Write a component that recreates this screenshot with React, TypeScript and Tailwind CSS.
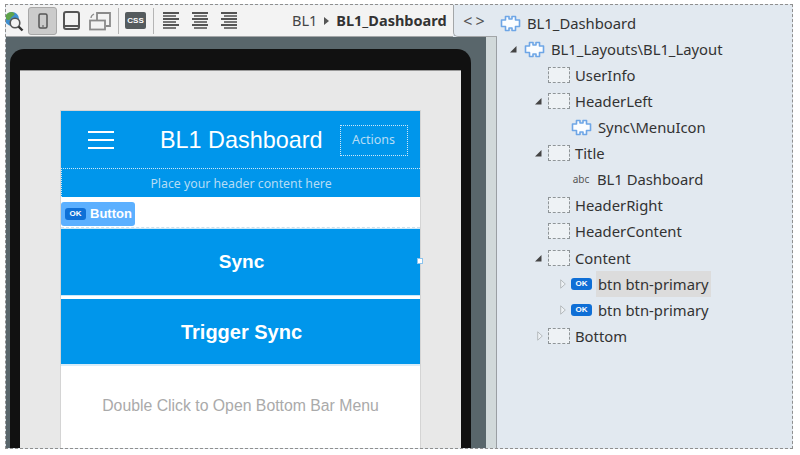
const uiFont = "font-['Noto_Sans',sans-serif]";

function Puzzle() {
  return (
    <svg width="21" height="17" viewBox="0 0 21 17" className="shrink-0">
      <path
        d="M5.500 1.500h3.500v2.500h3V1.500h3.500V5h4v6.500h-4v4h-3.500V13h-3v2.500H5.500v-4h-4V5h4z"
        fill="#fbfdff"
        stroke="#6ea6e6"
        strokeWidth="1.600"
        strokeLinejoin="round"
      />
    </svg>
  );
}

function Placeholder() {
  return <span className="block w-[22px] h-4 shrink-0 border border-dashed border-[#8f9598] bg-[#eef2f5]" />;
}

function OkBadge() {
  return (
    <span className="flex w-[21px] h-[12px] shrink-0 items-center justify-center rounded-[3px] bg-[#0f6fd6] text-[8px] leading-none font-bold text-white font-['Liberation_Sans',sans-serif]">
      OK
    </span>
  );
}

function Abc() {
  return <span className="block w-5 shrink-0 text-[10px] leading-none text-[#555] text-center">abc</span>;
}

function Arrow({ open }: { open?: boolean }) {
  return open ? (
    <svg width="8" height="8" viewBox="0 0 8 8" className="shrink-0">
      <path d="M7.500 1v6.500H1z" fill="#444" />
    </svg>
  ) : (
    <svg width="6" height="10" viewBox="0 0 6 10" className="shrink-0">
      <path d="M.7 .8 5.300 5 .7 9.200z" fill="#eef2f5" stroke="#b5babd" />
    </svg>
  );
}

const treeRows = [
  { label: "BL1_Dashboard", pad: "pl-[4px]", icon: <Puzzle />, gap: "gap-[6px]" },
  { label: "BL1_Layouts\\BL1_Layout", pad: "pl-[13px]", arrow: "w-[15px]", open: true, icon: <Puzzle />, gap: "gap-[6px]" },
  { label: "UserInfo", pad: "pl-[52px]", icon: <Placeholder />, gap: "gap-[5px]" },
  { label: "HeaderLeft", pad: "pl-[38px]", arrow: "w-[14px]", open: true, icon: <Placeholder />, gap: "gap-[5px]" },
  { label: "Sync\\MenuIcon", pad: "pl-[75px]", icon: <Puzzle />, gap: "gap-[6px]" },
  { label: "Title", pad: "pl-[38px]", arrow: "w-[14px]", open: true, icon: <Placeholder />, gap: "gap-[5px]" },
  { label: "BL1 Dashboard", pad: "pl-[75px]", icon: <Abc />, gap: "gap-[6px]" },
  { label: "HeaderRight", pad: "pl-[52px]", icon: <Placeholder />, gap: "gap-[5px]" },
  { label: "HeaderContent", pad: "pl-[52px]", icon: <Placeholder />, gap: "gap-[5px]" },
  { label: "Content", pad: "mt-px pl-[38px]", arrow: "w-[14px]", open: true, icon: <Placeholder />, gap: "gap-[5px]" },
  { label: "btn btn-primary", pad: "pl-[64px]", arrow: "w-[11px]", icon: <OkBadge />, gap: "gap-[6px]", selected: true },
  { label: "btn btn-primary", pad: "pl-[64px]", arrow: "w-[11px]", icon: <OkBadge />, gap: "gap-[6px]" },
  { label: "Bottom", pad: "pl-[41px]", arrow: "w-[11px]", icon: <Placeholder />, gap: "gap-[5px]" },
];

function TreeRow({ row }: { row: (typeof treeRows)[number] }) {
  return (
    <div className={`flex h-[26px] items-center ${row.pad}`}>
      {row.arrow && (
        <span className={`flex shrink-0 items-center ${row.arrow}`}>
          <Arrow open={row.open} />
        </span>
      )}
      <span className={`flex items-center ${row.gap}`}>
        {row.icon}
        <span className={row.selected ? "bg-[#dcdcdc] px-[2px] -mx-[2px] leading-[26px]" : "leading-[26px]"}>
          {row.label}
        </span>
      </span>
    </div>
  );
}

function AlignIcon({ align }: { align: string }) {
  return (
    <span className={`flex w-4 flex-col gap-[1.500px] ${align}`}>
      <span className="h-[1.500px] w-4 bg-[#555]" />
      <span className="h-[1.500px] w-[13px] bg-[#777]" />
      <span className="h-[1.500px] w-4 bg-[#555]" />
      <span className="h-[1.500px] w-[13px] bg-[#777]" />
      <span className="h-[1.500px] w-4 bg-[#555]" />
      <span className="h-[1.500px] w-[13px] bg-[#777]" />
    </span>
  );
}

function Toolbar() {
  return (
    <div className="flex h-[32px] w-[447px] shrink-0 items-center border-b border-[#a3a6a8] bg-[#f3f3f3]">
      <svg width="18" height="22" viewBox="0 0 18 22" className="shrink-0">
        <circle cx="6" cy="9" r="7" fill="#3d8fd0" />
        <path d="M0 5c2-3 6-4 8-2s-2 3-3 5-3 3-5 1z" fill="#5fa34a" />
        <circle cx="9" cy="13" r="4.800" fill="#f3f3f3" stroke="#555" strokeWidth="1.600" />
        <path d="M12.500 16.500l4 4" stroke="#333" strokeWidth="2.400" />
      </svg>
      <span className="ml-[4px] flex h-[28px] w-[29px] items-center justify-center rounded-[3px] border border-[#a8a8a8] bg-[#cbcbcb]">
        <svg width="10" height="16" viewBox="0 0 10 16">
          <rect x="1" y="1" width="8" height="14" rx="1.500" fill="none" stroke="#555" strokeWidth="1.500" />
          <path d="M4 13h2" stroke="#555" />
        </svg>
      </span>
      <svg width="17" height="19" viewBox="0 0 17 19" className="ml-[6px]">
        <rect x="1" y="1" width="15" height="17" rx="2" fill="none" stroke="#555" strokeWidth="2" />
        <path d="M1 15h15" stroke="#555" strokeWidth="2" />
      </svg>
      <svg width="22" height="20" viewBox="0 0 22 20" className="ml-[9px]">
        <path d="M8 9V2h13v13h-4" fill="none" stroke="#8a8a8a" strokeWidth="1.800" />
        <rect x="1" y="9.500" width="15" height="9" fill="#f3f3f3" stroke="#8a8a8a" strokeWidth="1.800" />
        <path d="M2 7c0-2 1-3 3-4" fill="none" stroke="#8a8a8a" strokeWidth="1.300" />
      </svg>
      <span className="ml-[7px] h-[26px] w-px bg-[#b5b5b5]" />
      <span className="ml-[6px] flex h-[17px] w-[21px] items-center justify-center rounded-[2px] bg-[#555b5e] text-[8px] font-bold text-white font-['Liberation_Sans',sans-serif]">
        CSS
      </span>
      <span className="ml-[7px] h-[26px] w-px bg-[#b5b5b5]" />
      <span className="ml-[9px]"><AlignIcon align="items-start" /></span>
      <span className="ml-[13px]"><AlignIcon align="items-center" /></span>
      <span className="ml-[13px]"><AlignIcon align="items-end" /></span>
      <span className={`ml-[55px] flex items-center text-[14.500px] text-[#444] ${uiFont}`}>
        BL1
        <svg width="5" height="8" viewBox="0 0 5 8" className="mx-[7px]">
          <path d="M0 0l5 4-5 4z" fill="#555" />
        </svg>
        <b className="text-[#333]">BL1_Dashboard</b>
      </span>
    </div>
  );
}

function PhoneContent() {
  return (
    <div className="ml-[40px] mt-[39px] w-[361px] border border-b-0 border-[#d4d4d4] bg-white font-['Liberation_Sans',sans-serif]">
      <div className="flex h-[57px] items-center bg-[#0096eb]">
        <span className="ml-[27px] flex w-[26px] flex-col gap-[6px]">
          <span className="h-[2px] bg-white" />
          <span className="h-[2px] bg-white" />
          <span className="h-[2px] bg-white" />
        </span>
        <span className="ml-[46px] pt-[2px] text-[23.400px] text-white">BL1 Dashboard</span>
        <span className={`ml-[17px] mt-[1px] flex h-[31px] w-[68px] items-center justify-center border border-dotted border-[#cfe8f8] text-[12.500px] text-[#b5dcf5] ${uiFont}`}>
          Actions
        </span>
      </div>
      <div className={`flex h-[29px] items-center justify-center border-t border-l border-dotted border-[#cfe8f8] bg-[#0096eb] pt-[2px] text-[12.300px] text-[#b5dcf5] ${uiFont}`}>
        Place your header content here
      </div>
      <div className="flex h-[31px] items-end border-b border-dashed border-[#cfe0ec]">
        <span className="mb-[1px] flex h-[24px] w-[74px] items-center gap-[4px] rounded-[3px] bg-[#5cb0ff] pl-[4px] text-[13px] font-bold text-white">
          <OkBadge />
          Button
        </span>
      </div>
      <div className="relative flex h-[68px] items-center justify-center border-y border-[#cde8f8] bg-[#0096eb] pl-[2px] text-[19px] font-bold text-white">
        Sync
        <span className="absolute right-[-3px] top-[29px] size-[6px] border border-[#8cc4ee] bg-white" />
      </div>
      <div className="mt-[3px] flex h-[67px] items-center justify-center border-b-2 border-[#d8ecf8] bg-[#0096eb] pl-[2px] text-[20px] font-bold text-white">
        Trigger Sync
      </div>
      <div className="flex h-[90px] items-start justify-center pt-[28px] text-[15.800px] text-[#aaaaaa]">
        Double Click to Open Bottom Bar Menu
      </div>
    </div>
  );
}

export default function App() {
  return (
    <div className="h-[455px] w-[800px] overflow-hidden bg-white pl-[5px] pt-[4px]">
      <div className="flex h-[445px] w-[788px] border border-dashed border-[#8f8f8f] bg-[#e2e9f0]">
        <div className="flex w-[491px] shrink-0 flex-col">
          <div className="flex">
            <Toolbar />
            <div className={`flex h-[32px] flex-1 items-center justify-center rounded-bl-[5px] border-b border-l border-[#a3a6a8] text-[16px] tracking-[3px] text-[#555] ${uiFont}`}>
              {"<>"}
            </div>
          </div>
          <div className="flex min-h-0 flex-1 overflow-hidden">
            <div className="flex-1 overflow-hidden bg-[#59666b] pl-[4px] pt-[12px]">
              <div className="h-[420px] w-[461px] rounded-t-[14px] bg-[#111111] px-[10px] pt-[21px]">
                <div className="h-[400px] overflow-hidden border-t border-[#999] bg-[#e8e8e8]">
                  <PhoneContent />
                </div>
              </div>
            </div>
            <div className="w-[11px] shrink-0 border-r border-[#9a9fa3] bg-[#d1d9da]" />
          </div>
        </div>
        <div className={`flex-1 pt-[5px] text-[14.800px] text-[#333] ${uiFont}`}>
          <div className="-ml-[1px]">
            {treeRows.map((row, i) => (
              <TreeRow key={i} row={row} />
            ))}
          </div>
        </div>
      </div>
    </div>
  );
}
